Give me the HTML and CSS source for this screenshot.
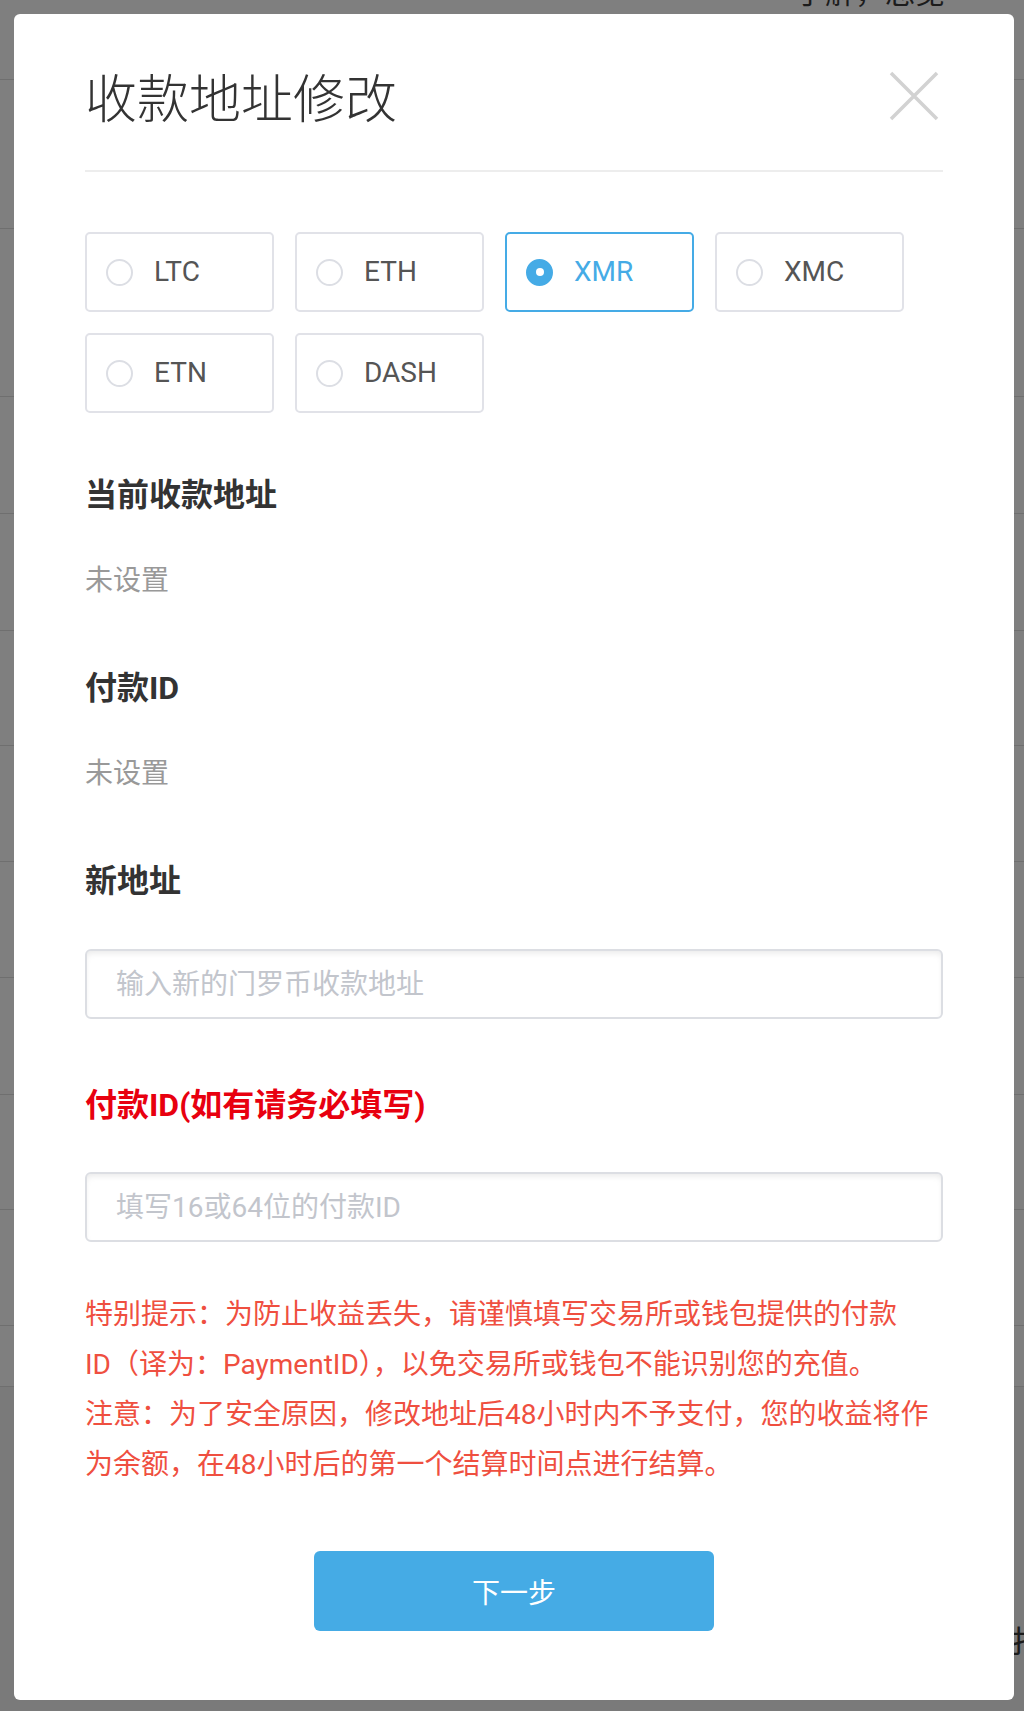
FILE: index.html
```html
<!DOCTYPE html>
<html lang="zh-CN">
<head>
<meta charset="utf-8">
<title>收款地址修改</title>
<link rel="stylesheet" href="styles.css">
</head>
<body>
<div class="page">
  <div class="row"><span class="peek-top">了解，总览</span><span class="peek-dash">-</span></div>
  <div class="row"></div>
  <div class="row"><span class="peek-left">：</span></div>
  <div class="row"></div>
  <div class="row"></div>
  <div class="row"></div>
  <div class="row"></div>
  <div class="row"></div>
  <div class="row"></div>
  <div class="row"></div>
  <div class="row"></div>
  <div class="row"></div>
  <div class="rest"><span class="peek-right">扌</span></div>
</div>

<div class="modal">
  <div class="modal-header">
    <h1 class="modal-title">收款地址修改</h1>
    <button class="close" aria-label="关闭">
      <svg width="50" height="50" viewBox="0 0 50 50"><path d="M2 2 L48 48 M48 2 L2 48" stroke="#d2d2d2" stroke-width="3.5" fill="none"/></svg>
    </button>
  </div>

  <div class="coins">
    <label class="coin"><span class="radio"></span><span class="coin-name">LTC</span></label>
    <label class="coin"><span class="radio"></span><span class="coin-name">ETH</span></label>
    <label class="coin active"><span class="radio"></span><span class="coin-name">XMR</span></label>
    <label class="coin"><span class="radio"></span><span class="coin-name">XMC</span></label>
    <label class="coin"><span class="radio"></span><span class="coin-name">ETN</span></label>
    <label class="coin"><span class="radio"></span><span class="coin-name">DASH</span></label>
  </div>

  <div class="label first">当前收款地址</div>
  <div class="value">未设置</div>

  <div class="label">付款ID</div>
  <div class="value">未设置</div>

  <div class="label">新地址</div>
  <input class="field" type="text" placeholder="输入新的门罗币收款地址">

  <div class="label warn">付款ID(如有请务必填写)</div>
  <input class="field" type="text" placeholder="填写16或64位的付款ID">

  <div class="notice">
    <p>特别提示：为防止收益丢失，请谨慎填写交易所或钱包提供的付款<span class="nobr">ID（译为：</span>PaymentID），以免交易所或钱包不能识别您的充值。</p>
    <p>注意：为了安全原因，修改地址后48小时内不予支付，您的收益将作为余额，在48小时后的第一个结算时间点进行结算。</p>
  </div>

  <div class="actions">
    <button class="next">下一步</button>
  </div>
</div>
</body>
</html>
```

FILE: styles.css
```css
* { box-sizing: border-box; }

html, body {
  margin: 0;
  padding: 0;
}

body {
  width: 1024px;
  height: 1711px;
  overflow: hidden;
  position: relative;
  background: #7f7f7f;
  font-family: Roboto, "Noto Sans CJK SC", sans-serif;
}

/* dimmed page behind the dialog */
.page {
  display: grid;
  grid-template-rows: 80px 149px 168px 117px 117px 115px 116px 116px 117px 115px 116px 61px 1fr;
  height: 1711px;
  position: relative;
}

.row {
  border-bottom: 1px solid #6f6f6f;
  position: relative;
}

.rest {
  background: #7a7a7a;
  position: relative;
}

.peek-top {
  position: absolute;
  left: 795px;
  top: -32px;
  font-size: 30px;
  color: #1c1c1c;
  font-family: "Noto Sans CJK SC", sans-serif;
}

.peek-dash {
  position: absolute;
  left: 1016px;
  top: -24px;
  font-size: 30px;
  color: #1c1c1c;
}

.peek-left {
  position: absolute;
  left: -14px;
  top: 74px;
  font-size: 28px;
  color: #1c1c1c;
  font-family: "Noto Sans CJK SC", sans-serif;
}

.peek-right {
  position: absolute;
  left: 1010px;
  top: 230px;
  font-size: 30px;
  color: #1c1c1c;
  font-family: "Noto Sans CJK SC", sans-serif;
}

/* dialog */
.modal {
  position: absolute;
  left: 14px;
  top: 14px;
  width: 1000px;
  height: 1686px;
  background: #fff;
  border-radius: 6px;
  padding: 56px 71px 68px;
  display: flex;
  flex-direction: column;
}

.modal-header {
  display: flex;
  justify-content: space-between;
  align-items: center;
  padding-bottom: 48px;
  border-bottom: 2px solid #ededed;
}

.modal-title {
  margin: 0;
  font-size: 52px;
  line-height: 52px;
  font-weight: 300;
  color: #333;
  font-family: "Noto Sans CJK SC", sans-serif;
}

.close {
  width: 50px;
  height: 50px;
  margin-right: 4px;
  padding: 0;
  border: 0;
  background: none;
  display: block;
}

.close svg { display: block; }

.coins {
  margin-top: 60px;
  display: grid;
  grid-template-columns: repeat(4, 189px);
  grid-auto-rows: 80px;
  column-gap: 21px;
  row-gap: 21px;
}

.coin {
  display: flex;
  align-items: center;
  padding-left: 19px;
  border: 2px solid #e1e2e8;
  border-radius: 5px;
  color: #555;
}

.radio {
  width: 27px;
  height: 27px;
  border: 2px solid #dcdee4;
  border-radius: 50%;
  flex: none;
  display: flex;
  align-items: center;
  justify-content: center;
}

.coin-name {
  margin-left: 21px;
  font-size: 28px;
  line-height: 28px;
}

.coin.active {
  border-color: #45abe6;
  color: #45abe6;
}

.coin.active .radio {
  background: #45abe6;
  border-color: #45abe6;
}

.coin.active .radio::after {
  content: "";
  width: 8px;
  height: 8px;
  border-radius: 50%;
  background: #fff;
}

.label {
  margin-top: 77px;
  font-size: 32px;
  line-height: 32px;
  font-weight: 700;
  color: #333;
}

.label.first { margin-top: 66px; }

.label.warn { margin-top: 70px; color: #e8000f; }

.value {
  margin-top: 56px;
  font-size: 28px;
  line-height: 28px;
  color: #999;
}

.field {
  display: block;
  width: 100%;
  height: 70px;
  margin-top: 52px;
  padding: 0 29px;
  border: 2px solid #dcdee3;
  border-radius: 6px;
  box-shadow: inset 0 4px 6px -2px rgba(0, 0, 0, 0.09);
  font-family: Roboto, "Noto Sans CJK SC", sans-serif;
  font-size: 28px;
  color: #333;
  outline: none;
}

.label.warn + .field { margin-top: 51px; }

.field::placeholder { color: #c2c5cc; }

.notice {
  margin-top: 48px;
  font-size: 28px;
  line-height: 50px;
  color: #ef4f40;
}

.notice p { margin: 0; }

.nobr { white-space: nowrap; }

.actions {
  margin-top: 61px;
  display: flex;
  justify-content: center;
}

.next {
  width: 400px;
  height: 80px;
  border: 0;
  border-radius: 6px;
  background: #45abe5;
  color: #fff;
  font-family: Roboto, "Noto Sans CJK SC", sans-serif;
  font-size: 28px;
}
```
